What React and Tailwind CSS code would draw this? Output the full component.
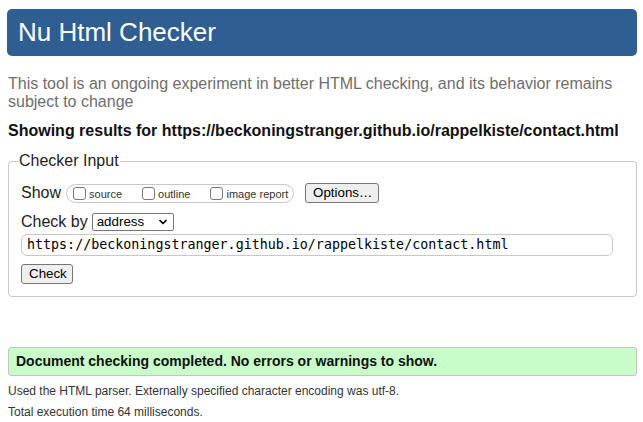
import { ChevronDown } from 'lucide-react'

const sans = "font-['Liberation_Sans',Arial,sans-serif]"

function Box({ label }) {
  return (
    <label className="flex items-center gap-[3px]">
      <span className="w-[13px] h-[13px] rounded-[3px] border border-[#767676] bg-white" />
      <span className="text-[11px] text-[#333] mt-[2px]">{label}</span>
    </label>
  )
}

function Btn({ children, className = '' }) {
  return (
    <button className={`h-[20px] px-[7px] rounded-[3px] border border-[#767676] bg-[#efefef] text-[13.33px] text-black leading-none ${className}`}>
      {children}
    </button>
  )
}

export default function App() {
  return (
    <div className={`bg-white min-h-[422px] pl-2 pr-[6px] pt-[9px] ${sans}`}>
      <h1 className="ml-[-1px] h-[47px] rounded-[5px] bg-[#2e5e92] pl-[11px] flex items-center text-[26px] text-white">
        Nu Html Checker
      </h1>

      <p className="mt-[19px] text-[16px] leading-[18px] text-[#6e6e6e]">
        This tool is an ongoing experiment in better HTML checking, and its behavior remains subject to change
      </p>

      <p className="mt-[11px] text-[16px] leading-[18px] font-bold text-[#111]">
        Showing results for https://beckoningstranger.github.io/rappelkiste/contact.html
      </p>

      <fieldset className="mt-[12px] border border-[#c8c8c8] rounded-[4px] pb-[11px]">
        <legend className="ml-[9px] px-[1px] text-[16px] leading-[18px] text-[#222]">Checker Input</legend>

        <div className="pl-[12px] pr-[23px]">
          <div className="mt-[13px] flex items-center h-[20px]">
            <span className="text-[16px] text-[#222] mr-[5px]">Show</span>
            <div className="h-[19px] w-[228px] rounded-full border border-[#c8c8c8] flex items-center pl-[6px] gap-[20px]">
              <Box label="source" />
              <Box label="outline" />
              <Box label="image report" />
            </div>
            <Btn className="ml-[11px] w-[74px]">Options…</Btn>
          </div>

          <div className="mt-[10px] flex items-center h-[18px]">
            <span className="text-[16px] text-[#222] mr-[4px]">Check by</span>
            <div className="h-[18px] w-[82px] border border-[#767676] rounded-[2px] flex items-center justify-between pl-[4px] pr-[4px] text-[13.33px] text-black">
              <span>address</span>
              <ChevronDown size={12} strokeWidth={3.5} />
            </div>
          </div>

          <div className="mt-[3px] h-[22px] rounded-[6px] border border-[#c8c8c8] flex items-center px-[5px] font-['DejaVu_Sans_Mono',monospace] text-[13.33px] text-black">
            https://beckoningstranger.github.io/rappelkiste/contact.html
          </div>

          <Btn className="mt-[8px] w-[52px]">Check</Btn>
        </div>
      </fieldset>

      <div className="mt-[50px] h-[29px] rounded-[3px] border border-[#c4c4c4] bg-[#c8fcc8] flex items-center pl-[7px] text-[14px] font-bold text-[#111]">
        Document checking completed. No errors or warnings to show.
      </div>

      <p className="mt-[5px] text-[12px] leading-[21px] text-[#333]">
        Used the HTML parser. Externally specified character encoding was utf-8.
      </p>
      <p className="text-[12px] leading-[21px] text-[#333]">Total execution time 64 milliseconds.</p>
    </div>
  )
}
